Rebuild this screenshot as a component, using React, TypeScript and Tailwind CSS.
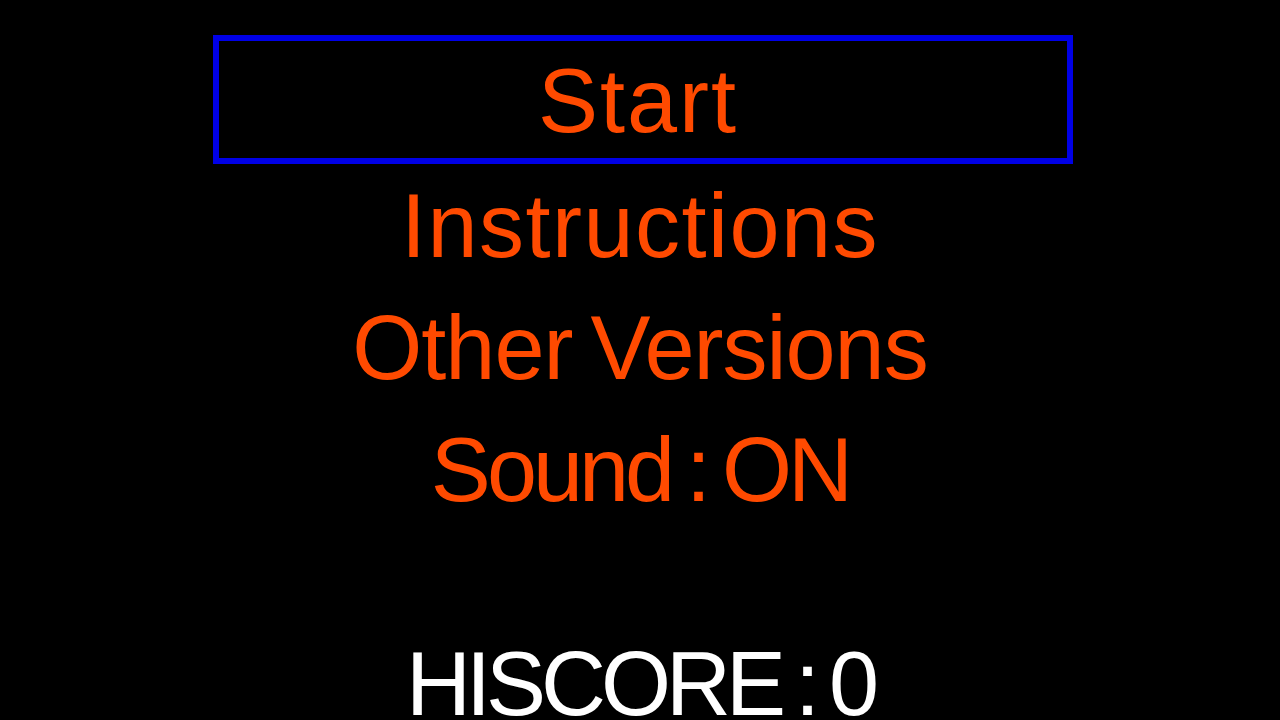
const items = [
  { label: "Instructions", tracking: "tracking-[1.5px]" },
  { label: "Other Versions", tracking: "tracking-[-1px]" },
  { label: "Sound : ON", tracking: "tracking-[-4px]" },
];

export default function App() {
  return (
    <div
      className="h-[720px] w-full overflow-hidden bg-black flex flex-col items-center select-none text-[90px] [word-spacing:-6px]"
      style={{ fontFamily: '"Liberation Sans", Arial, sans-serif' }}
    >
      {/* selected menu entry */}
      <div className="mt-[35px] ml-[6px] w-[860px] h-[129px] border-[6px] border-[#0000e6] flex justify-center pr-[10px]">
        <span className="pt-[4px] leading-[113px] text-[#ff4a00] tracking-[2px]">Start</span>
      </div>

      <div className="mt-[1px] flex flex-col items-center">
        {items.map((item) => (
          <div key={item.label} className={`h-[122px] leading-[122px] text-[#ff4a00] ${item.tracking}`}>
            {item.label}
          </div>
        ))}
      </div>

      <div className="mt-[92px] shrink-0 h-[122px] leading-[122px] text-white tracking-[-5px]">HISCORE : 0</div>
    </div>
  );
}
